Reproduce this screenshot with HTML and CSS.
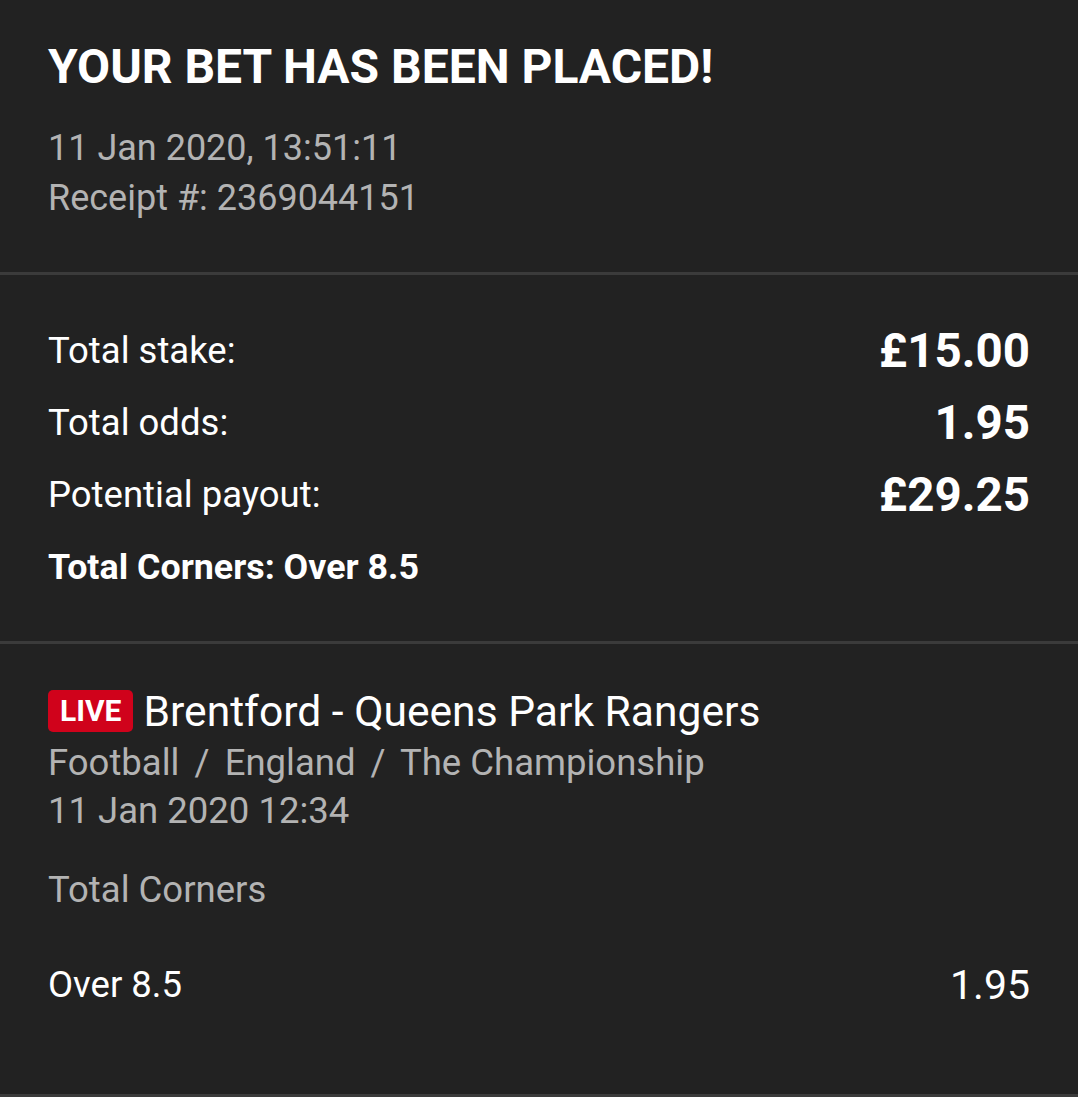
FILE: index.html
```html
<!DOCTYPE html>
<html>
<head>
<meta charset="utf-8">
<link rel="stylesheet" href="styles.css">
</head>
<body>
<div class="page">
  <section class="head">
    <h1 class="title">YOUR BET HAS BEEN PLACED!</h1>
    <div class="meta">11 Jan 2020, 13:51:11</div>
    <div class="meta">Receipt #: 2369044151</div>
  </section>
  <section class="summary">
    <div class="row"><span class="label">Total stake:</span><span class="value">£15.00</span></div>
    <div class="row"><span class="label">Total odds:</span><span class="value">1.95</span></div>
    <div class="row"><span class="label">Potential payout:</span><span class="value">£29.25</span></div>
    <div class="row"><span class="label strong">Total Corners: Over 8.5</span></div>
  </section>
  <section class="event">
    <div class="match"><span class="live">LIVE</span><span class="teams">Brentford - Queens Park Rangers</span></div>
    <div class="crumbs first">Football <span class="sep">/</span> England <span class="sep">/</span> The Championship</div>
    <div class="crumbs">11 Jan 2020 12:34</div>
    <div class="market">Total Corners</div>
    <div class="selection"><span class="sel-name">Over 8.5</span><span class="sel-odds">1.95</span></div>
  </section>
</div>
</body>
</html>
```

FILE: styles.css
```css
* { box-sizing: border-box; margin: 0; padding: 0; }
html, body { background: #222222; }
body { font-family: Roboto, "Noto Sans", sans-serif; color: #ffffff; }
.page { width: 1078px; height: 1097px; }

.head { padding: 39px 48px 0; border-bottom: 3px solid #3b3b3b; height: 275px; }
.title { font-size: 48px; font-weight: 700; line-height: 56px; margin-bottom: 28px; }
.meta { font-size: 36px; color: #b3b3b3; line-height: 50px; }

.summary { padding: 40px 48px 0; border-bottom: 3px solid #3b3b3b; height: 369px; }
.row { display: flex; justify-content: space-between; align-items: center; height: 72px; }
.label { font-size: 36.5px; line-height: 48px; }
.label.strong { font-weight: 700; font-size: 35.8px; }
.value { font-size: 47.5px; font-weight: 700; line-height: 56px; }

.event { padding: 43px 48px 0; height: 453px; border-bottom: 3px solid #3b3b3b; }
.match { display: flex; align-items: center; gap: 10px; height: 48px; }
.live { background: #d0021b; color: #fff; font-weight: 700; font-size: 30px; border-radius: 5px; padding: 0 12px; line-height: 42px; height: 42px; }
.teams { font-size: 42.6px; line-height: 48px; }
.crumbs { font-size: 36.5px; color: #b3b3b3; line-height: 48px; }
.crumbs.first { margin-top: 3.5px; }
.sep { margin: 0 6px; }
.market { font-size: 36.5px; color: #b3b3b3; margin-top: 31px; line-height: 48px; }
.selection { display: flex; justify-content: space-between; align-items: center; margin-top: 47px; height: 48px; }
.sel-name { font-size: 36.5px; line-height: 48px; }
.sel-odds { font-size: 41px; line-height: 48px; }
```
